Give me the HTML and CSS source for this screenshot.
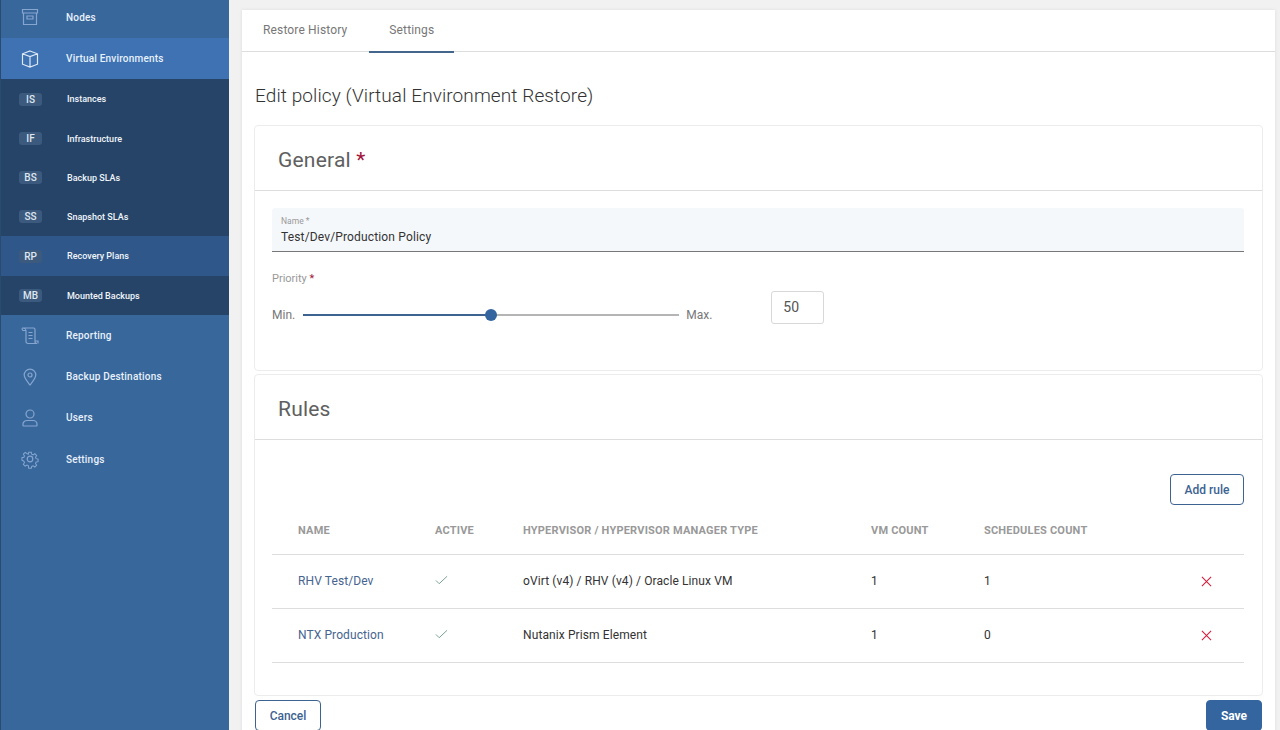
FILE: index.html
```html
<!DOCTYPE HTML>
<html>
  <head>
  <meta charset="UTF-8">
  <title>Edit policy</title>
  <link rel="stylesheet" href="styles.css">
  </head>

  <body>
    <div class="sidebar">
      <a class="nav nodes">
        <svg class="ico" viewBox="0 0 20 20"><path d="M2.500 2.500h15v3.500h-15zM3.500 6v11.500h13V6M7 9h6v3H7z"/></svg>
        <span>Nodes</span>
      </a>
      <a class="nav current">
        <svg class="ico cube" viewBox="0 0 20 20"><path d="M10 2l7.500 2.800v10.400L10 18l-7.500-2.800V4.800zM2.500 4.800L10 7.500l7.500-2.700M10 7.500V18"/></svg>
        <span>Virtual Environments</span>
      </a>
      <a class="sub h40"><b>IS</b><span>Instances</span></a>
      <a class="sub"><b>IF</b><span>Infrastructure</span></a>
      <a class="sub"><b>BS</b><span>Backup SLAs</span></a>
      <a class="sub"><b>SS</b><span>Snapshot SLAs</span></a>
      <a class="sub hover h40"><b>RP</b><span>Recovery Plans</span></a>
      <a class="sub"><b>MB</b><span>Mounted Backups</span></a>
      <a class="nav">
        <svg class="ico" viewBox="0 0 20 20"><path d="M2.500 2h11c1 0 1.500.8 1.500 1.800V15.500c0 1 .8 2 2 2H8c-1.200 0-2-1-2-2V5C6 3.500 4.500 2 2.500 2zM2.500 2C2 2 2 4.500 3 4.500h3M8.500 6.500h4M8.500 9.500h4M8.500 12.500h4M15 15h3v2.500"/></svg>
        <span>Reporting</span>
      </a>
      <a class="nav">
        <svg class="ico" viewBox="0 0 20 20"><path d="M10 18c-3-4-5.800-7-5.800-10a5.800 5.800 0 0 1 11.600 0c0 3-2.800 6-5.800 10z"/><circle cx="10" cy="8" r="2"/></svg>
        <span>Backup Destinations</span>
      </a>
      <a class="nav">
        <svg class="ico" viewBox="0 0 20 20"><circle cx="10" cy="6" r="4"/><path d="M3 17.500v-1.500c0-2.200 2-3.500 4-3.500h6c2 0 4 1.300 4 3.500v1.500c0 .3-.2.500-.5.500h-13c-.3 0-.5-.2-.5-.5z"/></svg>
        <span>Users</span>
      </a>
      <a class="nav tall">
        <svg class="ico" viewBox="0 0 20 20"><circle cx="10" cy="10" r="2.800"/><path d="M8.500 2h3l.5 2.400 1.600.7 2.100-1.300 2.100 2.100-1.300 2.100.7 1.600 2.300.5v3l-2.300.5-.7 1.600 1.300 2.100-2.100 2.100-2.100-1.300-1.600.7-.5 2.200h-3L8 17.800l-1.600-.7-2.100 1.300-2.100-2.100 1.300-2.100-.7-1.600L.5 11.500v-3l2.300-.5.7-1.600-1.300-2.100 2.100-2.100 2.100 1.300L8 4.400z" transform="translate(1.500 1.500) scale(.85)"/></svg>
        <span>Settings</span>
      </a>
    </div>

    <div class="main">
      <div class="tabs">
        <a class="tab">Restore History</a>
        <a class="tab active">Settings</a>
      </div>
      <div class="content">
        <h1>Edit policy (Virtual Environment Restore)</h1>

        <div class="card general">
          <div class="card-head">General <i>*</i></div>
          <div class="card-body">
            <div class="field">
              <label>Name *</label>
              <div class="value">Test/Dev/Production Policy</div>
            </div>
            <div class="prio-label">Priority <i>*</i></div>
            <div class="slider-row">
              <span>Min.</span>
              <div class="slider"><div class="fill"></div><div class="knob"></div></div>
              <span>Max.</span>
              <div class="num">50</div>
            </div>
          </div>
        </div>

        <div class="card rules">
          <div class="card-head">Rules</div>
          <div class="card-body">
            <div class="add-row"><button class="btn">Add rule</button></div>
            <table>
              <tr>
                <th class="c1">Name</th>
                <th class="c2">Active</th>
                <th class="c3">Hypervisor / Hypervisor Manager Type</th>
                <th class="c4">VM Count</th>
                <th class="c5">Schedules Count</th>
                <th></th>
              </tr>
              <tr>
                <td class="c1"><a>RHV Test/Dev</a></td>
                <td><svg class="check" viewBox="0 0 14 10"><path d="M1 5.500l3.500 3.500L13 1"/></svg></td>
                <td>oVirt (v4) / RHV (v4) / Oracle Linux VM</td>
                <td>1</td>
                <td>1</td>
                <td><svg class="cross" viewBox="0 0 12 12"><path d="M1 1l10 10M11 1L1 11"/></svg></td>
              </tr>
              <tr>
                <td class="c1"><a>NTX Production</a></td>
                <td><svg class="check" viewBox="0 0 14 10"><path d="M1 5.500l3.500 3.500L13 1"/></svg></td>
                <td>Nutanix Prism Element</td>
                <td>1</td>
                <td>0</td>
                <td><svg class="cross" viewBox="0 0 12 12"><path d="M1 1l10 10M11 1L1 11"/></svg></td>
              </tr>
            </table>
          </div>
        </div>

        <div class="actions">
          <button class="btn cancel">Cancel</button>
          <button class="btn save">Save</button>
        </div>
      </div>
    </div>
  </body>
</html>
```

FILE: styles.css
```css
html, body { margin: 0; height: 100%; overflow: hidden; }
body {
  display: flex;
  height: 730px;
  background: #f1f1f1;
  font-family: Roboto, "Liberation Sans", sans-serif;
  color: #333;
}
i { font-style: normal; color: #a3123a; }

/* sidebar */
.sidebar {
  width: 228px;
  flex: none;
  background: #38679c;
  border-left: 1px solid #2a4a70;
  display: flex;
  flex-direction: column;
  color: #fff;
}
.nav {
  display: flex;
  align-items: center;
  height: 41px;
  flex: none;
  font-size: 10px;
  font-weight: 500;
  letter-spacing: .2px;
  color: #e8f1fa;
}
.nodes { height: 38px; padding-bottom: 4px; box-sizing: border-box; }
.tall { height: 42px; }
.current { background: #3e72b3; }
.ico {
  width: 20px;
  height: 20px;
  margin: 0 26px 0 19px;
  fill: none;
  stroke: #86a6cf;
  stroke-width: 1.2;
}
.cube { stroke: #dfe9f5; }
.sub {
  display: flex;
  align-items: center;
  height: 39px;
  flex: none;
  background: #264468;
  font-size: 9px;
  font-weight: 500;
  color: #f0f5fa;
}
.h40 { height: 40px; }
.hover { background: #2f5789; }
.sub b {
  width: 23px;
  height: 13px;
  line-height: 13px;
  margin: 0 25px 0 18px;
  border-radius: 3px;
  background: #3c5a7e;
  text-align: center;
  font-size: 10px;
  font-weight: 500;
  color: #dfe7f0;
}

/* main panel */
.main {
  width: 1033px;
  height: 730px;
  margin: 10px 0 0 13px;
  background: #fff;
  box-shadow: 0 0 3px #ddd;
  flex: none;
}
.tabs {
  display: flex;
  gap: 2px;
  height: 41px;
  border-bottom: 1px solid #ddd;
  font-size: 12px;
  letter-spacing: .15px;
  color: #777;
}
.tab { padding: 13px 20px 0; height: 28px; }
.tab:first-child { margin-left: 1px; }
.active { border-bottom: 2px solid #44658c; }
.content { padding: 0 12px; }
h1 {
  margin: 32px 0 17px 1px;
  height: 24px;
  line-height: 24px;
  font-size: 19px;
  font-weight: 300;
  letter-spacing: .1px;
  color: #333;
}

.card {
  border: 1px solid #ececec;
  border-radius: 4px;
  box-sizing: border-box;
}
.general { height: 246px; margin-bottom: 3px; }
.rules { height: 322px; }
.card-head {
  height: 64px;
  line-height: 68px;
  padding-left: 23px;
  border-bottom: 1px solid #ddd;
  font-size: 21px;
  font-weight: 400;
  letter-spacing: .2px;
  color: #606060;
}
.card-body { padding: 17px 18px 0 17px; }

.field {
  height: 44px;
  box-sizing: border-box;
  padding: 9px 10px 0 9px;
  background: #f5f8fb;
  border-bottom: 1px solid #777;
  border-radius: 3px 3px 0 0;
}
.field label { display: block; font-size: 8.5px; line-height: 9px; color: #999; }
.value { margin-top: 3px; font-size: 12px; line-height: 17px; letter-spacing: .15px; color: #333; }

.prio-label { margin-top: 20px; font-size: 11px; line-height: 14px; color: #999; }
.slider-row {
  display: flex;
  align-items: center;
  height: 48px;
  margin-top: 5px;
  font-size: 12px;
  color: #777;
}
.slider {
  position: relative;
  width: 376px;
  height: 2px;
  margin: 0 7px 0 8px;
  background: #b5b5b5;
}
.fill { width: 188px; height: 2px; background: #3d6391; }
.knob {
  position: absolute;
  left: 182px;
  top: -5px;
  width: 12px;
  height: 12px;
  border-radius: 50%;
  background: #34659f;
}
.num {
  align-self: flex-start;
  width: 53px;
  height: 33px;
  line-height: 31px;
  margin-left: 59px;
  padding-left: 11px;
  box-sizing: border-box;
  border: 1px solid #d8d8d8;
  border-radius: 3px;
  font-size: 14px;
  color: #555;
}

.add-row { display: flex; justify-content: flex-end; padding-top: 17px; }
.btn {
  height: 31px;
  width: 74px;
  padding: 0;
  background: #fff;
  border: 1px solid #3d6391;
  border-radius: 4px;
  font-family: inherit;
  font-size: 12px;
  font-weight: 500;
  color: #3d6391;
}

table { width: 100%; border-collapse: collapse; table-layout: fixed; margin-top: 10px; }
th {
  height: 39px;
  padding: 0 0 8px;
  box-sizing: border-box;
  text-align: left;
  font-size: 11px;
  font-weight: 700;
  letter-spacing: .2px;
  text-transform: uppercase;
  color: #999;
  border-bottom: 1px solid #ddd;
}
td {
  height: 54px;
  padding: 0;
  box-sizing: border-box;
  font-size: 12px;
  letter-spacing: .1px;
  color: #333;
  border-bottom: 1px solid #ddd;
}
th.c1, td.c1 { padding-left: 26px; }
.c1 { width: 163px; }
.c2 { width: 88px; }
.c3 { width: 348px; }
.c4 { width: 113px; }
.c5 { width: 170px; }
td a { color: #46648f; }
.check { width: 13px; height: 10px; margin-bottom: 2px; fill: none; stroke: #6f9a8a; stroke-width: 1; display: block; }
.cross { width: 11px; height: 11px; fill: none; stroke: #d4203f; stroke-width: 1.2; display: block; margin: 1px 0 0 47px; }

.actions { display: flex; justify-content: space-between; margin: 4px 1px 0; }
.save {
  width: 56px;
  background: #34659f;
  color: #fff;
  border-color: #34659f;
  font-weight: 700;
}
.cancel { width: 66px; }
```
